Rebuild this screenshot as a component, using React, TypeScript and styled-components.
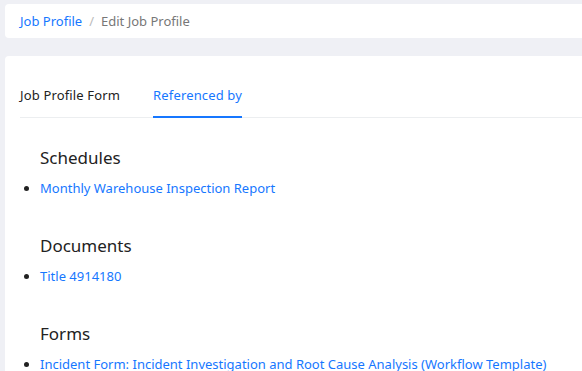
import React, { useState } from 'react';
import styled, { createGlobalStyle } from 'styled-components';

const GlobalStyle = createGlobalStyle`
  html, body {
    margin: 0;
    padding: 0;
    background: #eff0f5;
    font-family: 'Noto Sans', 'Open Sans', sans-serif;
    overflow: hidden;
  }
`;

const Layout = styled.div`
  display: flex;
  flex-direction: column;
  gap: 18px;
  padding: 4px 0 0 5px;
  margin-right: -10px;
`;

const Breadcrumb = styled.nav`
  display: flex;
  align-items: center;
  height: 34px;
  padding: 0 15px;
  background: #fff;
  border-radius: 4px;
  font-size: 13px;
`;

const CrumbLink = styled.a`
  color: #1677ff;
  text-decoration: none;
`;

const Separator = styled.span`
  color: #bbb;
  margin: 0 7px;
`;

const CrumbCurrent = styled.span`
  color: #777;
`;

const Card = styled.section`
  background: #fff;
  border-radius: 4px;
  padding: 0 0 40px 15px;
  min-height: 340px;
`;

const TabBar = styled.div`
  display: flex;
  gap: 33px;
  padding-top: 20px;
  border-bottom: 1px solid #eceef0;
`;

const Tab = styled.button<{ $active?: boolean }>`
  background: none;
  border: none;
  padding: 10px 0 12px;
  font-family: inherit;
  font-size: 13px;
  letter-spacing: 0.15px;
  color: ${p => (p.$active ? '#1677ff' : '#222')};
  border-bottom: 2px solid ${p => (p.$active ? '#1677ff' : 'transparent')};
  margin-bottom: -1px;
  cursor: pointer;
`;

const Content = styled.div`
  padding: 28px 0 0 20px;
`;

const Group = styled.div`
  margin-bottom: 37.5px;
`;

const Heading = styled.h3`
  margin: 0 0 9.5px;
  font-size: 17px;
  font-weight: 400;
  color: #222;
`;

const List = styled.ul`
  margin: 0;
  padding: 0;
  list-style: disc;
  font-size: 13px;
`;

const Item = styled.li`
  &::marker {
    color: #222;
  }
`;

const ItemLink = styled.a`
  color: #1677ff;
  text-decoration: none;
`;

const groups = [
  { title: 'Schedules', items: ['Monthly Warehouse Inspection Report'] },
  { title: 'Documents', items: ['Title 4914180'] },
  {
    title: 'Forms',
    items: ['Incident Form: Incident Investigation and Root Cause Analysis (Workflow Template)'],
  },
];

export default function App() {
  const [tab, setTab] = useState('ref');
  return (
    <>
      <GlobalStyle />
      <Layout>
        <Breadcrumb>
          <CrumbLink href="#">Job Profile</CrumbLink>
          <Separator>/</Separator>
          <CrumbCurrent>Edit Job Profile</CrumbCurrent>
        </Breadcrumb>
        <Card>
          <TabBar>
            <Tab $active={tab === 'form'} onClick={() => setTab('form')}>
              Job Profile Form
            </Tab>
            <Tab $active={tab === 'ref'} onClick={() => setTab('ref')}>
              Referenced by
            </Tab>
          </TabBar>
          <Content>
            {groups.map(g => (
              <Group key={g.title}>
                <Heading>{g.title}</Heading>
                <List>
                  {g.items.map(i => (
                    <Item key={i}>
                      <ItemLink href="#">{i}</ItemLink>
                    </Item>
                  ))}
                </List>
              </Group>
            ))}
          </Content>
        </Card>
      </Layout>
    </>
  );
}
